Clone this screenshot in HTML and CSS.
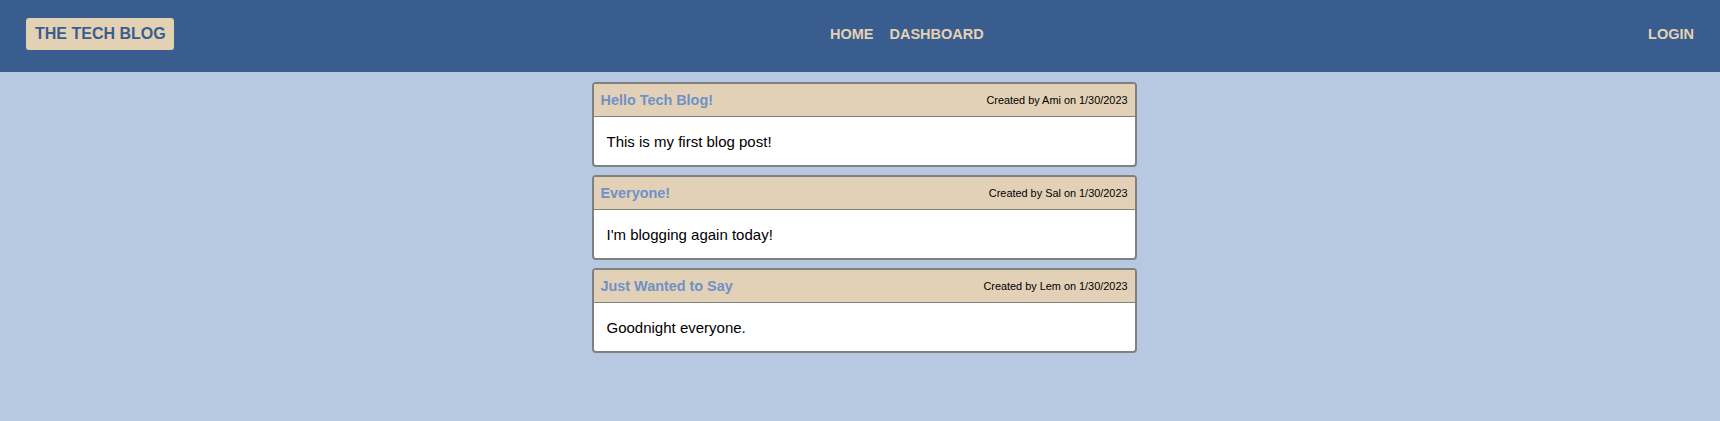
FILE: index.html
```html
<!DOCTYPE html>
<html lang="en">
<head>
<meta charset="utf-8">
<title>The Tech Blog</title>
<link rel="stylesheet" href="styles.css">
</head>
<body>
<header class="site-header">
  <a class="logo" href="#">THE TECH BLOG</a>
  <nav class="main-nav">
    <a href="#" class="nav-link">HOME</a>
    <a href="#" class="nav-link">DASHBOARD</a>
  </nav>
  <a href="#" class="nav-link">LOGIN</a>
</header>
<main class="posts">
  <article class="post">
    <div class="post-head">
      <h2 class="post-title">Hello Tech Blog!</h2>
      <span class="post-meta">Created by Ami on 1/30/2023</span>
    </div>
    <div class="post-body">This is my first blog post!</div>
  </article>
  <article class="post">
    <div class="post-head">
      <h2 class="post-title">Everyone!</h2>
      <span class="post-meta">Created by Sal on 1/30/2023</span>
    </div>
    <div class="post-body">I'm blogging again today!</div>
  </article>
  <article class="post">
    <div class="post-head">
      <h2 class="post-title">Just Wanted to Say</h2>
      <span class="post-meta">Created by Lem on 1/30/2023</span>
    </div>
    <div class="post-body">Goodnight everyone.</div>
  </article>
</main>
</body>
</html>
```
FILE: styles.css
```css
* { box-sizing: border-box; }

body {
  margin: 0;
  background: #b7c8e1;
  font-family: "Liberation Sans", Arial, sans-serif;
  color: #000;
}

.site-header {
  height: 72px;
  background: #3a5d8f;
  padding: 0 26px 4px;
  display: flex;
  align-items: center;
  justify-content: space-between;
}

.logo {
  display: block;
  background: #e3d1b4;
  color: #3a5d8f;
  font-weight: bold;
  font-size: 16px;
  line-height: 18px;
  padding: 7px 8px 7px 9px;
  border-radius: 3px;
  text-decoration: none;
}

.main-nav {
  display: flex;
  gap: 16px;
  margin-right: 8px;
}

.nav-link {
  color: #e3d1b4;
  font-weight: bold;
  font-size: 14.5px;
  text-decoration: none;
}

.posts {
  width: 545px;
  margin: 10px auto 0;
  position: relative;
  left: 4px;
  display: flex;
  flex-direction: column;
  gap: 8px;
}

.post {
  border: 2px solid #808080;
  border-radius: 4px;
  background: #fff;
  overflow: hidden;
}

.post-head {
  height: 33px;
  background: #e2d1b6;
  border-bottom: 1px solid #808080;
  padding: 0 7px;
  display: flex;
  align-items: center;
  justify-content: space-between;
}

.post-title {
  margin: 0;
  font-size: 14.4px;
  font-weight: bold;
  color: #6f91c9;
}

.post-meta {
  font-size: 10.9px;
  color: #000;
}

.post-body {
  height: 48px;
  padding: 0 13px;
  display: flex;
  align-items: center;
  font-size: 15px;
}
```
